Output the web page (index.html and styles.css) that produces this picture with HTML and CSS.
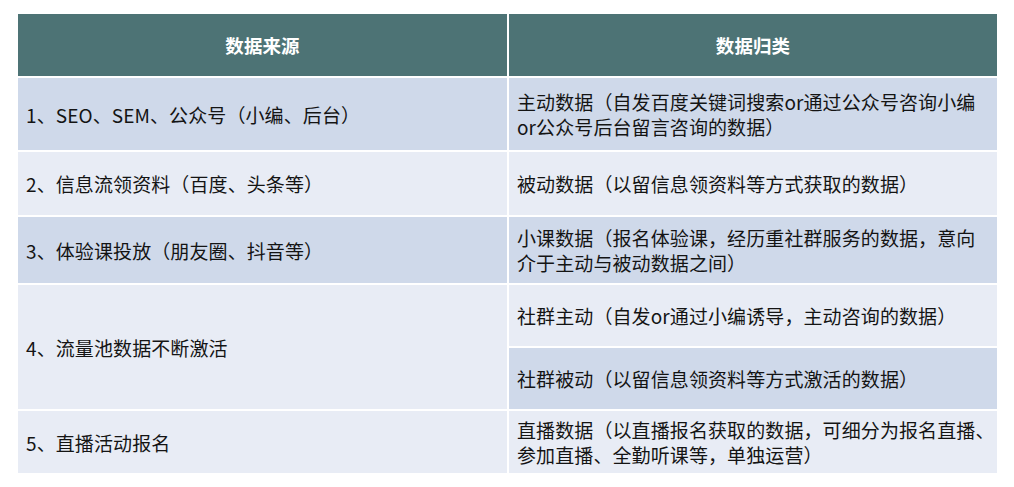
FILE: index.html
```html
<!DOCTYPE html>
<html lang="zh">
<head>
<meta charset="utf-8">
<link rel="stylesheet" href="styles.css">
</head>
<body>
<div class="table">
  <div class="cell head">数据来源</div>
  <div class="cell head">数据归类</div>

  <div class="cell dark r1">1、SEO、SEM、公众号（小编、后台）</div>
  <div class="cell dark r1">主动数据（自发百度关键词搜索or通过公众号咨询小编<br>or公众号后台留言咨询的数据）</div>

  <div class="cell light r2">2、信息流领资料（百度、头条等）</div>
  <div class="cell light r2">被动数据（以留信息领资料等方式获取的数据）</div>

  <div class="cell dark r3">3、体验课投放（朋友圈、抖音等）</div>
  <div class="cell dark r3">小课数据（报名体验课，经历重社群服务的数据，意向<br>介于主动与被动数据之间）</div>

  <div class="cell light span2">4、流量池数据不断激活</div>
  <div class="cell light r4">社群主动（自发or通过小编诱导，主动咨询的数据）</div>
  <div class="cell dark r4">社群被动（以留信息领资料等方式激活的数据）</div>

  <div class="cell light r5">5、直播活动报名</div>
  <div class="cell light r5">直播数据（以直播报名获取的数据，可细分为报名直播、<br>参加直播、全勤听课等，单独运营）</div>
</div>
</body>
</html>
```

FILE: styles.css
```css
html, body {
  margin: 0;
  padding: 0;
  background: #ffffff;
}
body {
  font-family: "Noto Sans CJK SC", "Microsoft YaHei", "Noto Sans", sans-serif;
  color: #141414;
}
.table {
  margin: 14px 0 0 18px;
  width: 979px;
  display: grid;
  grid-template-columns: 489px 488px;
  grid-template-rows: 62px 72px 63px 66px 61px 61px 62px;
  gap: 2px;
  background: #ffffff;
}
.cell {
  display: flex;
  align-items: center;
  padding: 0 8px;
  font-size: 19px;
  line-height: 25px;
  letter-spacing: 0.1px;
  white-space: nowrap;
}
.head {
  background: #4d7375;
  color: #ffffff;
  font-weight: bold;
  justify-content: center;
  font-size: 18.5px;
}
.dark {
  background: #cfd9ea;
}
.light {
  background: #e8ecf5;
}
.span2 {
  grid-row: span 2;
}
```
